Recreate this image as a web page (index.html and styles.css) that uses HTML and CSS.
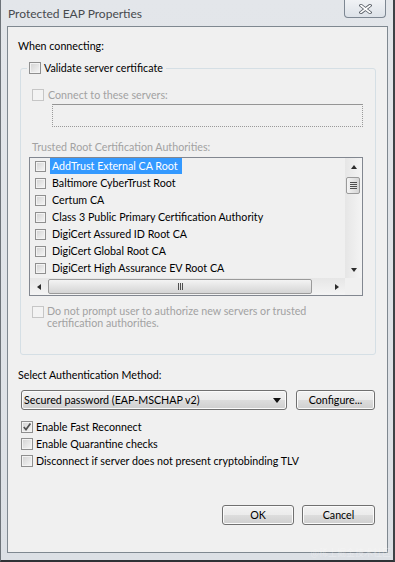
FILE: index.html
```html
<!DOCTYPE html>
<html>
<head>
<meta charset="utf-8">
<link rel="stylesheet" href="styles.css">
</head>
<body>
<div class="window">
  <div class="titlebar">
    <span class="title">Protected EAP Properties</span>
    <div class="close">
      <svg width="13" height="10" viewBox="0 0 13 10">
        <path d="M2 1.5 L11 8.5 M11 1.5 L2 8.5" stroke="#5a6068" stroke-width="3.4" stroke-linecap="square"/>
        <path d="M2 1.5 L11 8.5 M11 1.5 L2 8.5" stroke="#ffffff" stroke-width="1.6" stroke-linecap="square"/>
      </svg>
    </div>
  </div>
  <div class="client">
    <div class="label when">When connecting:</div>
    <fieldset class="group">
      <legend class="legend"><span class="cb"></span>Validate server certificate</legend>
      <div class="row connect disabled"><span class="cb dis"></span>Connect to these servers:</div>
      <div class="input"></div>
      <div class="trusted disabled">Trusted Root Certification Authorities:</div>
      <div class="listbox">
        <div class="list-main">
          <div class="items">
            <div class="item"><span class="cb small"></span><span class="itext sel">AddTrust External CA Root</span></div>
            <div class="item"><span class="cb small"></span><span class="itext">Baltimore CyberTrust Root</span></div>
            <div class="item"><span class="cb small"></span><span class="itext">Certum CA</span></div>
            <div class="item"><span class="cb small"></span><span class="itext">Class 3 Public Primary Certification Authority</span></div>
            <div class="item"><span class="cb small"></span><span class="itext">DigiCert Assured ID Root CA</span></div>
            <div class="item"><span class="cb small"></span><span class="itext">DigiCert Global Root CA</span></div>
            <div class="item"><span class="cb small"></span><span class="itext">DigiCert High Assurance EV Root CA</span></div>
          </div>
          <div class="vscroll">
            <div class="arrowcell"><span class="tri up"></span></div>
            <div class="vthumb"><span class="hgrip"></span><span class="hgrip"></span><span class="hgrip"></span><span class="hgrip"></span></div>
            <div class="vtrack"></div>
            <div class="arrowcell"><span class="tri down"></span></div>
          </div>
        </div>
        <div class="hrow">
          <div class="hscroll">
            <div class="arrowcell"><span class="tri left"></span></div>
            <div class="hthumb"><span class="vgrip"></span><span class="vgrip"></span><span class="vgrip"></span></div>
            <div class="htrack"></div>
            <div class="arrowcell"><span class="tri right"></span></div>
          </div>
          <div class="corner"></div>
        </div>
      </div>
      <div class="row prompt disabled"><span class="cb dis"></span><span class="ptext">Do not prompt user to authorize new servers or trusted<br>certification authorities.</span></div>
    </fieldset>
    <div class="label select">Select Authentication Method:</div>
    <div class="method-row">
      <div class="combo"><span>Secured password (EAP-MSCHAP v2)</span><span class="tri down dark"></span></div>
      <div class="btn configure">Configure...</div>
    </div>
    <div class="checks">
      <div class="crow"><span class="cb checked"><svg width="10" height="10" viewBox="0 0 10 10"><path d="M1.8 5 L4 7.6 L8.4 1.6" fill="none" stroke="#505050" stroke-width="1.7"/></svg></span>Enable Fast Reconnect</div>
      <div class="crow"><span class="cb"></span>Enable Quarantine checks</div>
      <div class="crow"><span class="cb"></span>Disconnect if server does not present cryptobinding TLV</div>
    </div>
    <div class="footer">
      <div class="btn ok">OK</div>
      <div class="btn cancel">Cancel</div>
    </div>
  </div>
  <div class="watermark">@稀土掘金技术社区</div>
</div>
</body>
</html>
```
FILE: styles.css
```css
* { box-sizing: border-box; }
html, body { margin: 0; padding: 0; }
body {
  width: 395px;
  height: 562px;
  overflow: hidden;
  font-family: Lato, "Noto Sans", sans-serif;
  font-size: 10.7px;
  color: #000;
  background: #dfe3e7;
}
.window {
  position: relative;
  width: 395px;
  height: 562px;
  background: linear-gradient(#e3e6ea, #dce0e5);
  border-left: 1px solid #6d7379;
  border-right: 2px solid #3e4246;
  border-bottom: 2px solid #2f3236;
}
.titlebar {
  height: 26px;
  display: flex;
  align-items: flex-start;
}
.title {
  padding: 7px 0 0 7px;
  font-size: 12px;
  line-height: 14px;
  color: #474a4e;
}
.close {
  margin-left: auto;
  margin-right: 7px;
  width: 42px;
  height: 18px;
  border: 1px solid #7d8792;
  border-top: none;
  border-radius: 0 0 4px 4px;
  background: linear-gradient(#f0f2f5, #dde2e8);
  display: flex;
  align-items: center;
  justify-content: center;
}
.client {
  margin-left: 6px;
  width: 381px;
  height: 527px;
  border: 1px solid #7f8890;
  background: #f0f0f0;
  padding-left: 10px;
}
.label { line-height: 14px; }
.when { margin-top: 12px; }
.disabled { color: #a2a2a2; }

.cb {
  display: inline-block;
  flex: none;
  width: 12px;
  height: 12px;
  border: 1px solid #8f8f8f;
  background: linear-gradient(135deg, #d2d2d2, #f6f6f6);
  box-shadow: inset 0 0 0 1px #f3f3f3;
}
.cb.small { width: 11px; height: 11px; }
.cb.dis {
  border-color: #c6c6c6;
  background: #f3f3f3;
  box-shadow: none;
}
.cb.checked { display: flex; align-items: center; justify-content: center; }

.group {
  margin: 8px 0 0 2px;
  padding: 0 0 25px 0;
  width: 356px;
  border: 1px solid #d5dfe5;
  border-radius: 3px;
  min-width: 0;
}
.legend {
  margin-left: 6px;
  padding: 0 3px 0 2px;
  height: 14px;
  line-height: 14px;
  display: flex;
  align-items: center;
  gap: 3px;
}
.row {
  display: flex;
  align-items: center;
  line-height: 14px;
}
.connect {
  margin-top: 13px;
  padding-left: 11px;
  gap: 4px;
}
.input {
  margin: 2px 0 0 31px;
  width: 311px;
  height: 23px;
  border: 1px dotted #9a9a9a;
  border-top: 1px solid #959595;
}
.trusted {
  margin: 13px 0 0 11px;
  line-height: 14px;
}
.listbox {
  margin: 3px 0 0 8px;
  width: 334px;
  height: 139px;
  border: 1px solid #828790;
  background: #f0f0f0;
  display: flex;
  flex-direction: column;
}
.list-main {
  display: flex;
  height: 120px;
}
.items {
  width: 315px;
  overflow: hidden;
}
.item {
  height: 17px;
  display: flex;
  align-items: center;
  padding-left: 5px;
  white-space: nowrap;
}
.item .cb { margin-right: 4px; }
.itext {
  padding: 0 4px 0 2px;
  line-height: 16px;
  height: 16px;
  align-self: flex-start;
}
.itext.sel {
  background: #3399ff;
  color: #fff;
}
.vscroll {
  width: 17px;
  height: 120px;
  display: flex;
  flex-direction: column;
  background: linear-gradient(90deg, #e6e6e6, #f4f4f4);
}
.arrowcell {
  width: 17px;
  height: 17px;
  flex: none;
  display: flex;
  align-items: center;
  justify-content: center;
}
.vthumb {
  margin: 2px 0 0 1px;
  width: 14px;
  height: 17px;
  border: 1px solid #9a9a9a;
  border-radius: 2px;
  background: linear-gradient(90deg, #f4f4f4, #e4e4e4 50%, #d5d5d5);
  display: flex;
  flex-direction: column;
  align-items: center;
  justify-content: center;
  gap: 1px;
}
.hgrip { width: 7px; height: 1px; background: #4f4f4f; }
.vtrack { flex: 1; }
.hrow { display: flex; height: 17px; }
.hscroll {
  width: 315px;
  height: 17px;
  display: flex;
  background: linear-gradient(#e6e6e6, #f4f4f4);
}
.hthumb {
  margin: 1px 0 0 1px;
  width: 264px;
  height: 15px;
  border: 1px solid #9a9a9a;
  border-radius: 2px;
  background: linear-gradient(#f4f4f4, #e4e4e4 50%, #d5d5d5);
  display: flex;
  align-items: center;
  justify-content: center;
  gap: 1px;
}
.vgrip { width: 1px; height: 7px; background: #4f4f4f; }
.htrack { flex: 1; }
.corner { width: 17px; height: 17px; background: #f0f0f0; }

.tri { width: 0; height: 0; display: inline-block; }
.tri.up { border-left: 3.5px solid transparent; border-right: 3.5px solid transparent; border-bottom: 4px solid #2c2c2c; }
.tri.down { border-left: 3.5px solid transparent; border-right: 3.5px solid transparent; border-top: 4px solid #2c2c2c; }
.tri.left { border-top: 3.5px solid transparent; border-bottom: 3.5px solid transparent; border-right: 4px solid #2c2c2c; }
.tri.right { border-top: 3.5px solid transparent; border-bottom: 3.5px solid transparent; border-left: 4px solid #2c2c2c; }
.tri.down.dark { border-left-width: 4px; border-right-width: 4px; border-top: 5px solid #111; }

.prompt {
  margin-top: 9px;
  padding-left: 11px;
  gap: 3px;
  align-items: flex-start;
  line-height: 12px;
}
.prompt .cb { margin-top: 1px; }

.select { margin-top: 13px; }
.method-row {
  margin: 8px 0 0 3px;
  display: flex;
  gap: 9px;
}
.btn {
  height: 20px;
  border: 1px solid #707070;
  border-radius: 3px;
  background: linear-gradient(#f2f2f2, #ebebeb 50%, #dddddd 50%, #cfcfcf);
  box-shadow: inset 0 0 0 1px #fbfbfb;
  display: flex;
  align-items: center;
  justify-content: center;
  line-height: 14px;
}
.combo {
  width: 266px;
  height: 20px;
  border: 1px solid #707070;
  border-radius: 3px;
  background: linear-gradient(#f2f2f2, #ebebeb 50%, #dddddd 50%, #cfcfcf);
  box-shadow: inset 0 0 0 1px #fbfbfb;
  display: flex;
  align-items: center;
  justify-content: space-between;
  padding: 0 5px 0 2px;
  line-height: 14px;
}
.configure { width: 79px; }
.checks { margin: 8px 0 0 3px; }
.crow {
  height: 17px;
  display: flex;
  align-items: center;
  gap: 3px;
}
.footer {
  margin-top: 36px;
  padding-right: 12px;
  display: flex;
  justify-content: flex-end;
  gap: 8px;
}
.ok { width: 72px; }
.cancel { width: 73px; }
.watermark {
  position: absolute;
  right: 2px;
  bottom: 2px;
  font-family: "Noto Sans CJK SC", sans-serif;
  font-size: 9px;
  line-height: 10px;
  color: rgba(255, 255, 255, 0.3);
}
```
